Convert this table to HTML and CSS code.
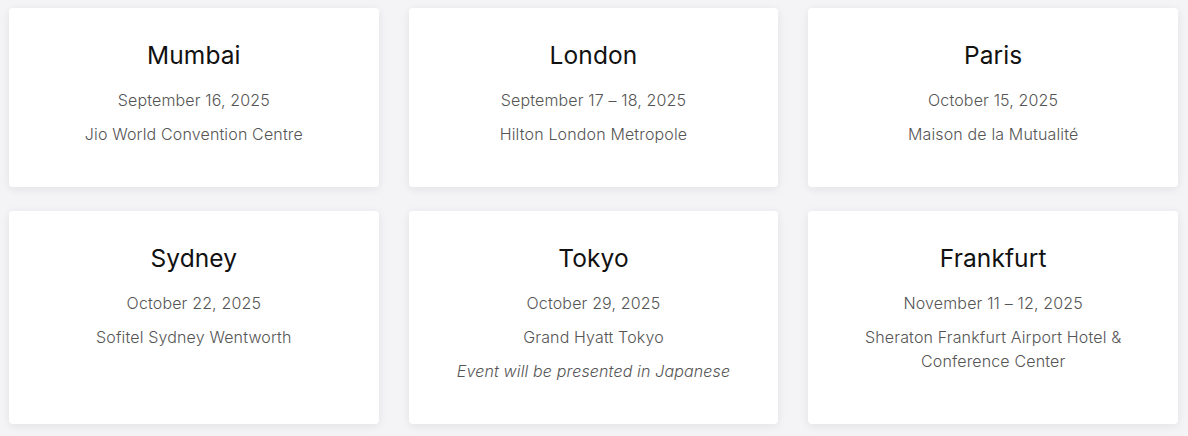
FILE: index.html
```html
<!DOCTYPE html>
<html lang="en">
<head>
<meta charset="utf-8">
<title>Events</title>
<link rel="stylesheet" href="styles.css">
</head>
<body>
<main class="grid">
  <article class="card">
    <h2 class="city">Mumbai</h2>
    <p class="info">September 16, 2025</p>
    <p class="info">Jio World Convention Centre</p>
  </article>
  <article class="card">
    <h2 class="city">London</h2>
    <p class="info">September 17 – 18, 2025</p>
    <p class="info">Hilton London Metropole</p>
  </article>
  <article class="card">
    <h2 class="city">Paris</h2>
    <p class="info">October 15, 2025</p>
    <p class="info">Maison de la Mutualité</p>
  </article>
  <article class="card">
    <h2 class="city">Sydney</h2>
    <p class="info">October 22, 2025</p>
    <p class="info">Sofitel Sydney Wentworth</p>
  </article>
  <article class="card">
    <h2 class="city">Tokyo</h2>
    <p class="info">October 29, 2025</p>
    <p class="info">Grand Hyatt Tokyo</p>
    <p class="info note">Event will be presented in Japanese</p>
  </article>
  <article class="card">
    <h2 class="city">Frankfurt</h2>
    <p class="info">November 11 – 12, 2025</p>
    <p class="info">Sheraton Frankfurt Airport Hotel &amp;<br>Conference Center</p>
  </article>
</main>
</body>
</html>
```
FILE: styles.css
```css
html, body {
  margin: 0;
  padding: 0;
  background: #f4f4f6;
}
body {
  font-family: Inter, "Liberation Sans", sans-serif;
}
.grid {
  display: grid;
  grid-template-columns: repeat(3, 1fr);
  column-gap: 30px;
  row-gap: 24px;
  padding: 8px 10px 12px 9px;
}
.card {
  background: #fff;
  border-radius: 4px;
  box-shadow: 0 2px 10px rgba(20, 25, 50, 0.08);
  padding: 31px 24px 41px;
  text-align: center;
}
.city {
  margin: 0 0 17px;
  font-size: 24.5px;
  line-height: 32px;
  font-weight: 400;
  letter-spacing: 0.1px;
  color: #111;
}
.info {
  margin: 10px 0 0;
  font-size: 16px;
  line-height: 24px;
  font-weight: 300;
  letter-spacing: 0.15px;
  color: #555;
}
.city + .info {
  margin-top: 0;
}
.note {
  font-style: italic;
}
```
